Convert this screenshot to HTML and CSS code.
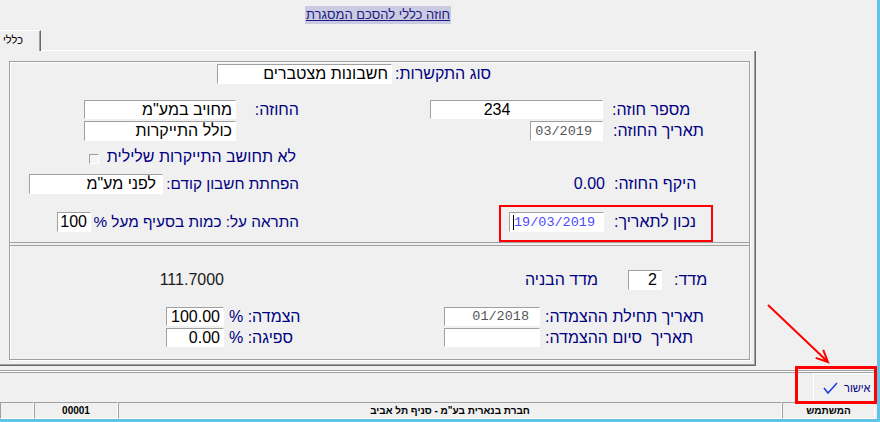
FILE: index.html
```html
<!DOCTYPE html>
<html lang="he">
<head>
<meta charset="utf-8">
<title>חוזה כללי להסכם המסגרת</title>
<link rel="stylesheet" href="styles.css">
</head>
<body>
<div class="window">
  <div class="main">
    <div class="form-area">
      <div class="title-row"><span class="title">חוזה כללי להסכם המסגרת</span></div>
      <div class="tabs">
        <div class="tab">כללי</div>
        <div class="tab-fill"></div>
      </div>
      <div class="panel">
        <div class="group">
          <div class="top">
            <div class="row r1">
              <div class="in in-type">חשבונות מצטברים</div>
              <div class="lb lb-type">סוג התקשרות:</div>
            </div>
            <div class="row r2">
              <div class="in in-left">מחויב במע"מ</div>
              <div class="lb lb-r w63">החוזה:</div>
              <div class="in in-num">234</div>
              <div class="lb lb-col pl9">מספר חוזה:</div>
            </div>
            <div class="row r3">
              <div class="in in-left">כולל התייקרות</div>
              <div class="in mono in-cdate">03/2019</div>
              <div class="lb lb-col pl10">תאריך החוזה:</div>
            </div>
            <div class="row r4">
              <span class="chk"></span>
              <div class="lb lb-r w197">לא תחושב התייקרות שלילית</div>
            </div>
            <div class="row r5">
              <div class="in in-prev">לפני מע"מ</div>
              <div class="lb lb-r lb-tight w136">הפחתת חשבון קודם:</div>
              <div class="lb lb-r w306">0.00</div>
              <div class="lb lb-col pl9">היקף החוזה:</div>
            </div>
            <div class="row r6">
              <div class="in in-pct">100</div>
              <div class="lb lb-r lb-tight w208">התראה על: כמות בסעיף מעל %</div>
              <div class="in mono in-asof"><span class="caret"></span>19/03/2019</div>
              <div class="lb lb-col pl10">נכון לתאריך:</div>
            </div>
          </div>
          <div class="sep-in"></div>
          <div class="bottom">
            <div class="row r7">
              <div class="val w214">111.7000</div>
              <div class="lb lb-r w374">מדד הבניה</div>
              <div class="in in-idx">2</div>
              <div class="lb lb-col pl12">מדד:</div>
            </div>
            <div class="row r8">
              <div class="in in-link">100.00</div>
              <div class="lb lb-l w220">הצמדה: %</div>
              <div class="in mono in-ldate">01/2018</div>
              <div class="lb lb-col pl5">תאריך תחילת ההצמדה:</div>
            </div>
            <div class="row r9">
              <div class="in in-link">0.00</div>
              <div class="lb lb-l w220">ספיגה: %</div>
              <div class="in mono in-ldate"></div>
              <div class="lb lb-col pl5">תאריך  סיום ההצמדה:</div>
            </div>
          </div>
        </div>
      </div>
    </div>
  </div>
  <div class="sep"></div>
  <div class="toolbar">
    <div class="btn">
      <svg class="check" width="15" height="12" viewBox="0 0 15 12"><path d="M1 6 L5 11 L14 1" fill="none" stroke="#1f3fe0" stroke-width="1.6"/></svg>
      <span class="btn-text">אישור</span>
    </div>
  </div>
  <div class="status">
    <div class="cell c1"></div>
    <div class="cell c2">00001</div>
    <div class="cell c3">חברת בנארית בע"מ - סניף תל אביב</div>
    <div class="cell c4">המשתמש</div>
  </div>
</div>
<div class="mark mark-a"></div>
<div class="mark mark-b"></div>
<svg class="arrow" width="880" height="422" viewBox="0 0 880 422">
  <path d="M768 305 L828 362 M815.7 357.9 L828 362 L823.2 349.9" fill="none" stroke="#f00" stroke-width="2"/>
</svg>
</body>
</html>
```
FILE: styles.css
```css
* { box-sizing: border-box; }
html, body { margin: 0; padding: 0; }
body {
  position: relative;
  width: 880px;
  height: 422px;
  overflow: hidden;
  background: #f0f0f0;
  font-family: "Liberation Sans", Arial, "DejaVu Sans", sans-serif;
}
.window {
  width: 880px;
  height: 422px;
  border-right: 3px solid #62c3e9;
  border-bottom: 3px solid #62c3e9;
  display: flex;
  flex-direction: column;
}
.main { display: flex; height: 366px; }
.form-area { width: 756px; display: flex; flex-direction: column; }
.title-row {
  height: 30px;
  display: flex;
  justify-content: center;
  padding-top: 6px;
}
.title {
  background: #cacae2;
  color: #1c1c80;
  text-decoration: underline;
  font-size: 13px;
  line-height: 18px;
  height: 18px;
  padding: 0 1px;
  direction: rtl;
}
.tabs { height: 21px; display: flex; }
.tab {
  width: 41px;
  height: 21px;
  border-top: 1px solid #fff;
  border-right: 1px solid #696969;
  box-shadow: inset -1px 0 #a0a0a0;
  font-size: 11px;
  line-height: 19px;
  padding-left: 3px;
  color: #000;
  direction: rtl;
  text-align: left;
}
.tab-fill { flex: 1; border-bottom: 1px solid #fff; }
.panel {
  height: 315px;
  padding: 10px 5px 5px 9px;
  border-right: 1px solid #696969;
  border-bottom: 1px solid #696969;
  box-shadow: inset -1px -1px #a0a0a0;
}
.group {
  width: 741px;
  height: 299px;
  border: 1px solid #a0a0a0;
  box-shadow: inset 1px 1px #fff, 1px 1px #fff;
}
.top { height: 178px; }
.sep-in {
  height: 4px;
  border-top: 1px solid #a0a0a0;
  border-bottom: 1px solid #a0a0a0;
}
.row { display: flex; align-items: center; }
.r1 { margin-top: 2px; height: 20px; }
.r2 { margin-top: 16px; height: 19px; }
.r3 { margin-top: 2px; height: 20px; }
.r4 { margin-top: 9px; height: 14px; }
.r5 { margin-top: 10px; height: 20px; }
.r6 { margin-top: 18px; height: 20px; }
.r7 { margin-top: 24px; height: 20px; }
.r8 { margin-top: 17px; height: 19px; }
.r9 { margin-top: 2px; height: 19px; }

.in {
  height: 100%;
  background: #fff;
  border: 1px solid;
  border-color: #a0a0a0 #fff #fff #a0a0a0;
  font-size: 16px;
  color: #000;
  direction: rtl;
  text-align: right;
  padding: 0 3px;
  white-space: nowrap;
  overflow: hidden;
  display: flex;
  align-items: center;
}
.mono {
  font-family: "Liberation Mono", "Courier New", monospace;
  font-size: 13.5px;
  color: #555;
  direction: ltr;
  justify-content: flex-end;
  padding-right: 10px;
}
.in-type { margin-left: 207px; width: 175px; }
.in-left { margin-left: 74px; width: 152px; }
.in-num { margin-left: 131px; width: 173px; justify-content: center; padding-right: 42px; }
.in-cdate { margin-left: 294px; width: 73px; }
.in-prev { margin-left: 19px; width: 134px; padding-right: 6px; }
.in-pct { margin-left: 47px; width: 34px; }
.in-asof { margin-left: 210px; width: 95px; color: #4b4bff; padding-right: 8px; position: relative; }
.caret {
  position: absolute;
  left: 3px;
  top: 2px;
  height: 15px;
  border-left: 1px solid #000;
}
.in-idx { margin-left: 30px; width: 34px; padding-right: 4px; }
.in-link { margin-left: 156px; width: 58px; }
.in-ldate { margin-left: 0; width: 96px; }

.lb {
  font-size: 16px;
  color: #000080;
  direction: rtl;
  white-space: pre;
}
.lb-tight { font-size: 15.3px; }
.lb-type { margin-left: 3px; }
.lb-r { text-align: right; }
.lb-l { text-align: left; padding-left: 5px; }
.lb-col { text-align: left; }
.pl5 { padding-left: 5px; }
.pl9 { padding-left: 9px; }
.pl10 { padding-left: 10px; }
.pl12 { padding-left: 12px; }
.w63 { width: 63px; }
.w136 { width: 136px; }
.w197 { width: 197px; }
.w208 { width: 208px; }
.w220 { width: 220px; }
.w306 { width: 306px; }
.w374 { width: 374px; }
.w214 { width: 214px; }
.val {
  font-size: 16px;
  color: #1a1a1a;
  text-align: right;
}
.chk {
  margin-left: 79px;
  margin-top: 4px;
  width: 10px;
  height: 10px;
  border: 1px solid;
  border-color: #a0a0a0 #fff #fff #a0a0a0;
  background: #f4f4f4;
}

.sep {
  margin-top: 4px;
  height: 3px;
  border-top: 1px solid #a0a0a0;
  border-bottom: 1px solid #a0a0a0;
  background: #fff;
}
.toolbar {
  height: 29px;
  display: flex;
  justify-content: flex-end;
  padding-right: 2px;
}
.btn {
  width: 62px;
  height: 29px;
  border: 1px solid;
  border-color: #fff #a0a0a0 #a0a0a0 #fff;
  display: flex;
  align-items: center;
  padding-left: 9px;
  gap: 6px;
}
.check { display: block; }
.btn-text { font-size: 11px; color: #000080; direction: rtl; }
.status {
  height: 17px;
  display: flex;
}
.cell {
  height: 17px;
  border: 1px solid;
  border-color: #a0a0a0 #fff #fff #a0a0a0;
  font-size: 10px;
  font-weight: bold;
  color: #000;
  text-align: center;
  line-height: 15px;
  direction: rtl;
  white-space: nowrap;
}
.c1 { width: 34px; }
.c2 { width: 84px; }
.c3 { width: 664px; }
.c4 { width: 93px; }

.mark {
  position: absolute;
  border-style: solid;
  border-color: #f00;
  pointer-events: none;
}
.mark-a { left: 499px; top: 205px; width: 214px; height: 37px; border-width: 2px; }
.mark-b { left: 795px; top: 366px; width: 82px; height: 38px; border-width: 3px; }
.arrow { position: absolute; left: 0; top: 0; pointer-events: none; }
```
